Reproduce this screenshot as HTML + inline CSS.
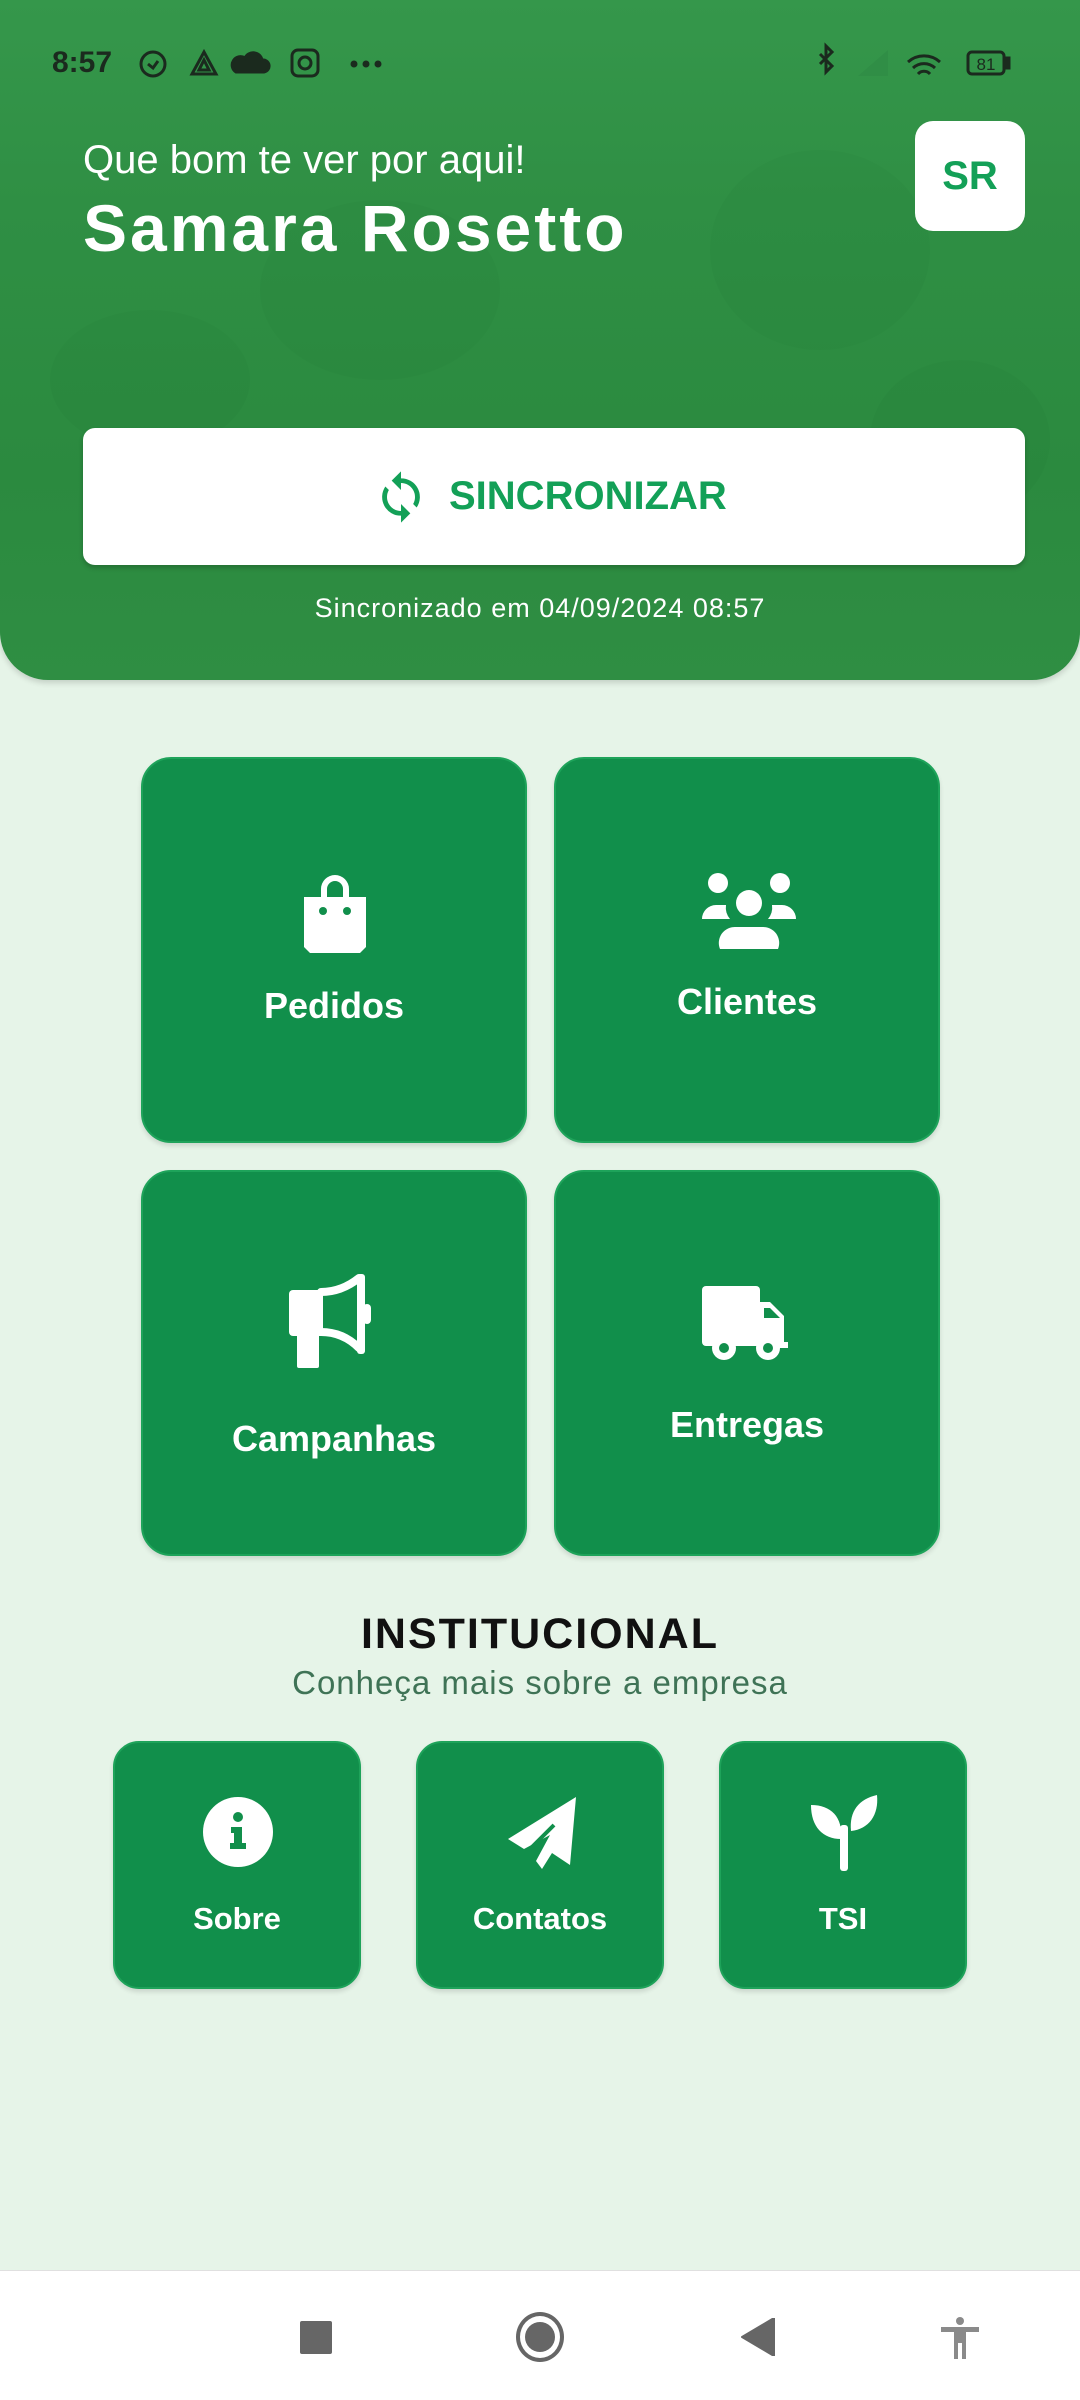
<!DOCTYPE html>
<html><head><meta charset="utf-8"><style>
*{margin:0;padding:0;box-sizing:border-box}
body{width:1080px;height:2400px;background:#e6f4e8;font-family:"Liberation Sans",sans-serif;position:relative;overflow:hidden}
.hdr{position:absolute;left:0;top:0;width:1080px;height:680px;border-radius:0 0 48px 48px;background:linear-gradient(180deg,#35974b 0%,#2f8f44 30%,#2b8a3f 70%,#2f8e43 100%);overflow:hidden;box-shadow:0 3px 6px rgba(0,0,0,.15)}
.abs{position:absolute}
.card{position:absolute;background:#118f4b;border:2px solid #1ea35a;border-radius:30px;box-shadow:0 3px 5px rgba(0,0,0,.12);color:#fff;text-align:center}
.card .lb{position:absolute;left:0;right:0;font-size:36px;font-weight:bold}
.sm{position:absolute;top:1741px;width:248px;height:248px;background:#118f4b;border:2px solid #1ea35a;border-radius:26px;box-shadow:0 3px 5px rgba(0,0,0,.12);color:#fff;text-align:center}
.sm .lb{position:absolute;left:0;right:0;top:158px;font-size:31px;font-weight:bold}
.sm svg{position:absolute;left:86px;top:52px}
</style></head><body>
<div class="hdr">
 <svg class="abs" style="left:0;top:0" width="1080" height="680" opacity="0.07">
  <ellipse cx="380" cy="290" rx="120" ry="90" fill="#1a6d2d"/>
  <ellipse cx="820" cy="250" rx="110" ry="100" fill="#1a6d2d"/>
  <ellipse cx="150" cy="380" rx="100" ry="70" fill="#1a6d2d"/>
  <ellipse cx="960" cy="440" rx="90" ry="80" fill="#1a6d2d"/>
 </svg>
 <div class="abs" style="left:52px;top:46px;font-size:30px;font-weight:bold;color:#1b2a1e">8:57</div>
 <svg class="abs" style="left:136px;top:46px" width="260" height="34" fill="none" stroke="#1b2a1e" stroke-width="3">
  <circle cx="17" cy="18" r="12"/><path d="M12 18l5 4 5-7"/>
  <path d="M68 6l12 22H56z"/><path d="M68 14l5 10h-10z"/>
  <path d="M100 26h28a6 6 0 0 0-2-12 9 9 0 0 0-17-2 7 7 0 0 0-9 14z" fill="#1b2a1e"/>
  <rect x="156" y="4" width="26" height="26" rx="6"/><circle cx="169" cy="17" r="6"/>
  <circle cx="218" cy="18" r="2" fill="#1b2a1e"/><circle cx="230" cy="18" r="2" fill="#1b2a1e"/><circle cx="242" cy="18" r="2" fill="#1b2a1e"/>
 </svg>
 <svg class="abs" style="left:812px;top:40px" width="230" height="44" fill="none" stroke="#1b2a1e" stroke-width="3">
  <path d="M8 14l12 12-6 6V6l6 6-12 12"/>
  <path d="M46 36h30V10z" fill="#2f8a44" stroke="none" opacity=".6"/>
  <path d="M96 22a24 24 0 0 1 32 0M101 28a16 16 0 0 1 22 0M106 34a8 8 0 0 1 12 0"/>
  <rect x="156" y="12" width="36" height="22" rx="4"/><rect x="193" y="18" width="4" height="10" fill="#1b2a1e"/>
  <text x="174" y="30" font-size="17" font-family="Liberation Sans" fill="#1b2a1e" stroke="none" text-anchor="middle">81</text>
 </svg>
 <div class="abs" style="left:83px;top:138px;font-size:40px;color:#fff">Que bom te ver por aqui!</div>
 <div class="abs" style="left:83px;top:190px;font-size:66px;font-weight:bold;color:#fff;letter-spacing:3px">Samara Rosetto</div>
 <div class="abs" style="left:915px;top:121px;width:110px;height:110px;background:#fff;border-radius:18px;color:#13a057;font-size:40px;font-weight:bold;text-align:center;line-height:110px">SR</div>
 <div class="abs" style="left:83px;top:428px;width:942px;height:137px;background:#fff;border-radius:12px;box-shadow:0 3px 5px rgba(0,0,0,.2)">
  <svg class="abs" style="left:290px;top:38px" width="56" height="62" viewBox="0 0 24 24" fill="#13a057"><path d="M12 4V1L8 5l4 4V6a6 6 0 0 1 5.2 9l1.5 1.5A8 8 0 0 0 12 4zm0 14a6 6 0 0 1-5.2-9L5.3 7.5A8 8 0 0 0 12 20v3l4-4-4-4z"/></svg>
  <div class="abs" style="left:366px;top:46px;font-size:40px;font-weight:bold;color:#13a057">SINCRONIZAR</div>
 </div>
 <div class="abs" style="left:0;width:1080px;top:593px;text-align:center;font-size:27px;color:#fff;letter-spacing:1px">Sincronizado em 04/09/2024 08:57</div>
</div>

<div class="card" style="left:141px;top:757px;width:386px;height:386px">
 <svg class="abs" style="left:155px;top:112px" width="74" height="84" viewBox="0 0 74 84" fill="#fff"><path d="M23 26V18a14 14 0 0 1 28 0v8h-6v-8a8 8 0 0 0-16 0v8z"/><path d="M6 26h62v50l-6 6H12l-6-6z"/><circle cx="25" cy="40" r="4" fill="#118f4b"/><circle cx="49" cy="40" r="4" fill="#118f4b"/></svg>
 <div class="lb" style="top:226px">Pedidos</div>
</div>
<div class="card" style="left:554px;top:757px;width:386px;height:386px">
 <svg class="abs" style="left:146px;top:114px" width="94" height="76" viewBox="0 0 94 76" fill="#fff"><circle cx="16" cy="10" r="10"/><circle cx="78" cy="10" r="10"/><path d="M0 46a14 14 0 0 1 14-14h10a18 18 0 0 0 4 14z"/><path d="M94 46a14 14 0 0 0-14-14H70a18 18 0 0 1-4 14z"/><circle cx="47" cy="30" r="13"/><path d="M18 76a16 16 0 0 1 16-22h26a16 16 0 0 1 16 22z"/></svg>
 <div class="lb" style="top:222px">Clientes</div>
</div>
<div class="card" style="left:141px;top:1170px;width:386px;height:386px">
 <svg class="abs" style="left:144px;top:102px" width="94" height="94" viewBox="0 0 94 94" fill="#fff">
  <path d="M6 16h30v46H6a4 4 0 0 1-4-4V20a4 4 0 0 1 4-4z"/>
  <rect x="10" y="58" width="22" height="36" rx="2"/>
  <path d="M34 18c16 0 28-6 38-14" fill="none" stroke="#fff" stroke-width="8" stroke-linecap="round"/>
  <path d="M34 58c16 0 28 6 38 16" fill="none" stroke="#fff" stroke-width="8" stroke-linecap="round"/>
  <rect x="70" y="0" width="8" height="80" rx="3"/>
  <rect x="76" y="30" width="8" height="20" rx="4"/>
 </svg>
 <div class="lb" style="top:246px">Campanhas</div>
</div>
<div class="card" style="left:554px;top:1170px;width:386px;height:386px">
 <svg class="abs" style="left:146px;top:114px" width="94" height="76" viewBox="0 0 94 76" fill="#fff"><rect x="0" y="0" width="58" height="60" rx="4"/><path d="M56 16h12l14 14v26h4v6H56z"/><path d="M62 22h6l10 10H62z" fill="#118f4b"/><circle cx="22" cy="62" r="12" fill="#fff"/><circle cx="22" cy="62" r="5" fill="#118f4b"/><circle cx="66" cy="62" r="12" fill="#fff"/><circle cx="66" cy="62" r="5" fill="#118f4b"/></svg>
 <div class="lb" style="top:232px">Entregas</div>
</div>

<div class="abs" style="left:0;width:1080px;top:1610px;text-align:center;font-size:43px;font-weight:bold;color:#111;letter-spacing:2px">INSTITUCIONAL</div>
<div class="abs" style="left:0;width:1080px;top:1664px;text-align:center;font-size:33px;color:#3f7356;letter-spacing:1px">Conheça mais sobre a empresa</div>

<div class="sm" style="left:113px">
 <svg width="74" height="74" viewBox="0 0 74 74"><circle cx="37" cy="37" r="35" fill="#fff"/><circle cx="37" cy="22" r="5" fill="#118f4b"/><path d="M30 32h11v16h4v6H29v-6h4v-10h-3z" fill="#118f4b"/></svg>
 <div class="lb">Sobre</div>
</div>
<div class="sm" style="left:416px">
 <svg width="76" height="76" viewBox="0 0 76 76" fill="#fff"><path d="M72 2L66 70 48 58 38 74 32 66 46 40 20 54 4 44z"/><path d="M50 30L26 54" stroke="#118f4b" stroke-width="4"/></svg>
 <div class="lb">Contatos</div>
</div>
<div class="sm" style="left:719px">
 <svg width="76" height="76" viewBox="0 0 76 76" fill="#fff">
  <path d="M4 10c20 0 32 12 30 34C16 44 4 32 4 10z"/>
  <path d="M70 0c2 20-8 34-26 36C42 16 52 4 70 0z"/>
  <rect x="33" y="30" width="8" height="46" rx="3"/>
 </svg>
 <div class="lb">TSI</div>
</div>

<div class="abs" style="left:0;top:2270px;width:1080px;height:130px;background:#fff;border-top:1px solid #e0e0e0">
 <div class="abs" style="left:300px;top:50px;width:32px;height:33px;background:#666;border-radius:2px"></div>
 <div class="abs" style="left:516px;top:41px;width:48px;height:50px;border:4px solid #666;border-radius:50%"></div>
 <div class="abs" style="left:525px;top:51px;width:30px;height:30px;background:#666;border-radius:50%"></div>
 <svg class="abs" style="left:740px;top:47px" width="36" height="38"><path d="M34 0v38L2 19z" fill="#666" stroke="#666" stroke-width="2" stroke-linejoin="round"/></svg>
 <svg class="abs" style="left:940px;top:44px" width="40" height="44" fill="#8a8a8a"><circle cx="20" cy="6" r="4"/><rect x="1" y="12" width="38" height="5"/><rect x="14" y="14" width="12" height="14"/><rect x="14" y="26" width="4" height="18"/><rect x="22" y="26" width="4" height="18"/></svg>
</div>
</body></html>
